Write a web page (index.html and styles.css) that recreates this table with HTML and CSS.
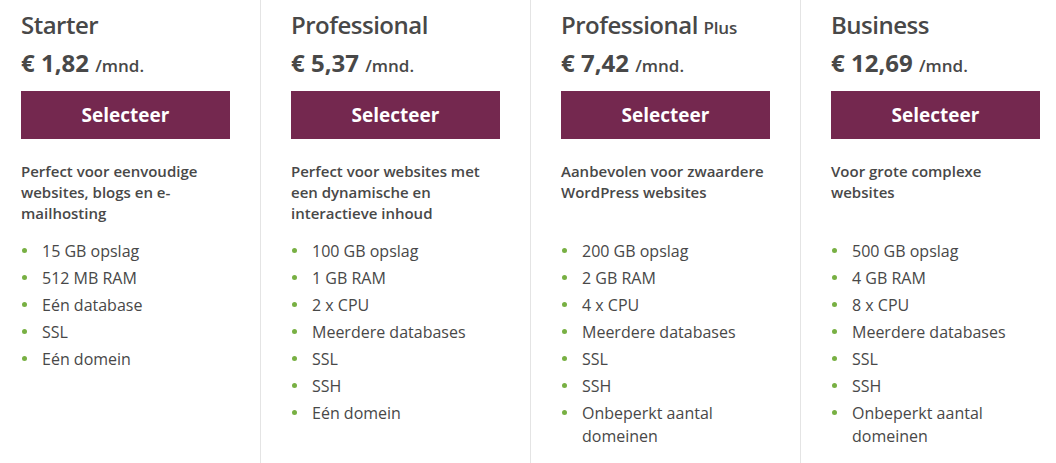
FILE: index.html
```html
<!DOCTYPE html>
<html lang="nl">
<head>
<meta charset="utf-8">
<title>Pakketten</title>
<link rel="stylesheet" href="styles.css">
</head>
<body>
<div class="plans">
  <section class="plan">
    <h2 class="plan-title">Starter</h2>
    <p class="plan-price">€ 1,82 <span class="per">/mnd.</span></p>
    <a class="plan-btn" href="#">Selecteer</a>
    <p class="plan-desc">Perfect voor eenvoudige websites, blogs en e-mailhosting</p>
    <ul class="plan-features">
      <li>15 GB opslag</li>
      <li>512 MB RAM</li>
      <li>Eén database</li>
      <li>SSL</li>
      <li>Eén domein</li>
    </ul>
  </section>
  <section class="plan">
    <h2 class="plan-title">Professional</h2>
    <p class="plan-price">€ 5,37 <span class="per">/mnd.</span></p>
    <a class="plan-btn" href="#">Selecteer</a>
    <p class="plan-desc">Perfect voor websites met een dynamische en interactieve inhoud</p>
    <ul class="plan-features">
      <li>100 GB opslag</li>
      <li>1 GB RAM</li>
      <li>2 x CPU</li>
      <li>Meerdere databases</li>
      <li>SSL</li>
      <li>SSH</li>
      <li>Eén domein</li>
    </ul>
  </section>
  <section class="plan">
    <h2 class="plan-title">Professional <small class="plus">Plus</small></h2>
    <p class="plan-price">€ 7,42 <span class="per">/mnd.</span></p>
    <a class="plan-btn" href="#">Selecteer</a>
    <p class="plan-desc">Aanbevolen voor zwaardere WordPress websites</p>
    <ul class="plan-features">
      <li>200 GB opslag</li>
      <li>2 GB RAM</li>
      <li>4 x CPU</li>
      <li>Meerdere databases</li>
      <li>SSL</li>
      <li>SSH</li>
      <li>Onbeperkt aantal domeinen</li>
    </ul>
  </section>
  <section class="plan">
    <h2 class="plan-title">Business</h2>
    <p class="plan-price">€ 12,69 <span class="per">/mnd.</span></p>
    <a class="plan-btn" href="#">Selecteer</a>
    <p class="plan-desc">Voor grote complexe websites</p>
    <ul class="plan-features">
      <li>500 GB opslag</li>
      <li>4 GB RAM</li>
      <li>8 x CPU</li>
      <li>Meerdere databases</li>
      <li>SSL</li>
      <li>SSH</li>
      <li>Onbeperkt aantal domeinen</li>
    </ul>
  </section>
</div>
</body>
</html>
```

FILE: styles.css
```css
* { box-sizing: border-box; }

html, body {
  margin: 0;
  padding: 0;
  background: #ffffff;
}

body {
  font-family: "Open Sans", "Liberation Sans", sans-serif;
  color: #484848;
  height: 463px;
  overflow: hidden;
}

.plans {
  display: flex;
  align-items: stretch;
  height: 463px;
}

.plan {
  width: 270px;
  padding: 9px 30px 0 30px;
  border-left: 1px solid #e4e4e4;
}

.plan:first-child {
  width: 260px;
  padding-left: 21px;
  border-left: none;
}

.plan-title {
  margin: 0;
  font-size: 24px;
  line-height: 32px;
  font-weight: 600;
  letter-spacing: -0.5px;
}

.plus {
  font-size: 17px;
  line-height: 1;
  font-weight: 600;
  letter-spacing: -0.2px;
}

.plan-price {
  margin: 6px 0 0 0;
  font-size: 24px;
  line-height: 32px;
  font-weight: 700;
}

.per {
  font-size: 17px;
  line-height: 1;
  font-weight: 600;
}

.plan-btn {
  display: flex;
  align-items: center;
  justify-content: center;
  width: 209px;
  height: 48px;
  margin-top: 12px;
  background: #74284f;
  color: #ffffff;
  font-size: 19px;
  font-weight: 700;
  text-decoration: none;
}

.plan-desc {
  margin: 22px 0 0 0;
  min-height: 63px;
  font-size: 15px;
  line-height: 21px;
  font-weight: 600;
}

.plan-features {
  list-style: none;
  margin: 16px 0 0 0;
  padding: 0;
}

.plan-features li {
  display: flex;
  gap: 15px;
  font-size: 16px;
  line-height: 23px;
  margin-bottom: 4px;
}

.plan-features li::before {
  content: "";
  flex: 0 0 5px;
  height: 5px;
  margin-top: 8px;
  margin-left: 1px;
  border-radius: 50%;
  background: #78b043;
}
```
